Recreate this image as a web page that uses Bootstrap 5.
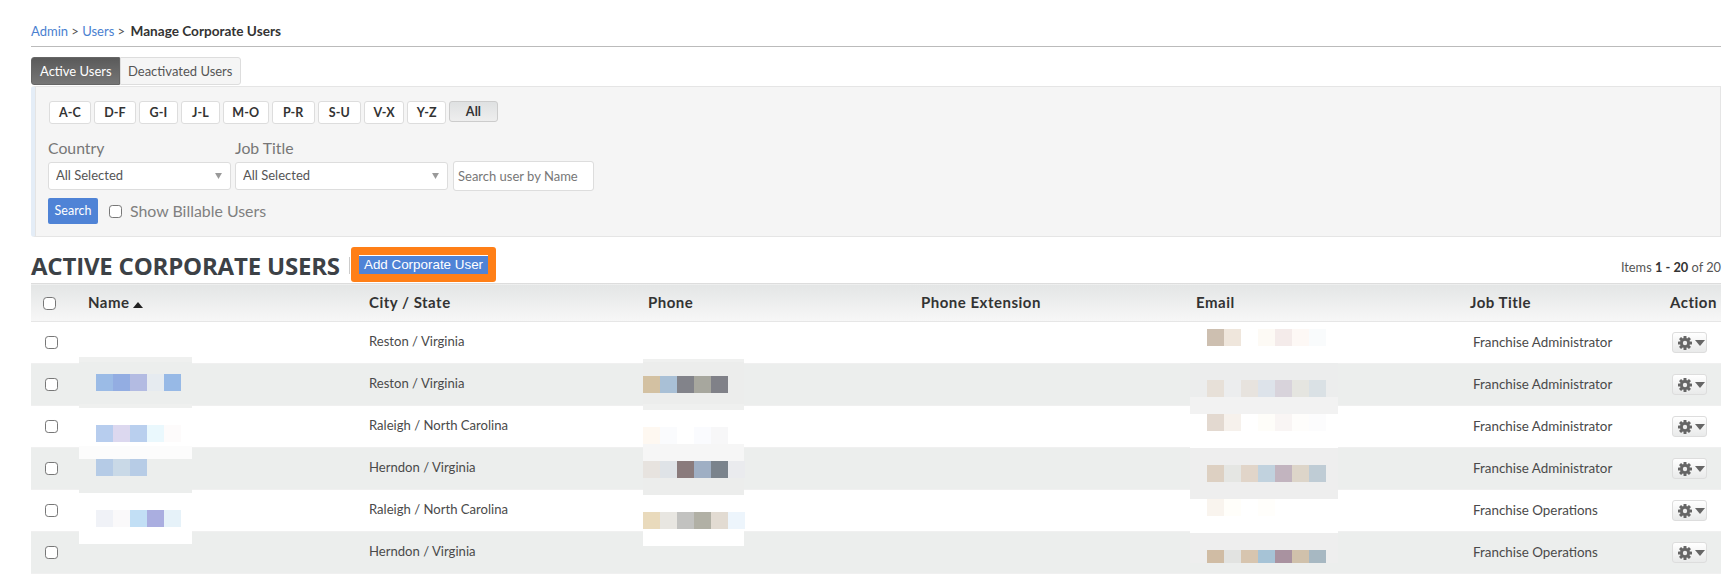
<!DOCTYPE html>
<html lang="en"><head><meta charset="utf-8"><title>Manage Corporate Users</title>
<link href="https://cdn.jsdelivr.net/npm/bootstrap@5.3.0/dist/css/bootstrap.min.css" rel="stylesheet">
<style>
html,body{background:#fff;overflow:hidden}
body{font-family:Lato,"Noto Sans",sans-serif;font-size:13px;color:#444;height:575px}
.pg{position:relative;padding:21px 10px 0 31px;width:1731px;height:575px;overflow:hidden}
.crumb{height:26px;border-bottom:1px solid #bbb;font-size:13px;line-height:20px;margin-bottom:10px;white-space:nowrap;color:#555}
.crumb a{color:#4a7fd0;text-decoration:none}
.crumb b{color:#333;margin-left:2px;font-weight:700;font-size:13.600px}
.tabs{height:28px;margin-bottom:1px}
.tb{height:28px;padding:0 0 0 8px;line-height:26px;font-size:13px;border:1px solid #ddd;background:#f5f5f5;color:#555;border-radius:0 3px 3px 0;white-space:nowrap}
.tb.on{background:linear-gradient(#5a5a5a,#767676);color:#fff;border-color:#666;border-radius:3px 0 0 3px;width:89px}
.tb.off{width:121px;padding-left:7px}
.filt{height:151px;background:#f5f5f5;border:1px solid #e5e5e5;border-left:4px solid #e4edf7;box-shadow:inset 1px 0 0 #e4e4e4;padding:14px 0 0 14px;border-radius:3px 0 0 3px}
.ltrs{gap:3.200px;height:37px}
.lt{height:23px;padding:0;line-height:21px;font-size:12.500px;font-weight:700;color:#333;background:#fff;border:1px solid #ddd;border-radius:3px;letter-spacing:.1px}
.lt.cur{height:21px;line-height:15px;background:linear-gradient(#dfe1e2,#eee);border-color:#ccc}
.w42{width:42px}.w41{width:41.600px}.w39{width:38.800px}.w40{width:40px}.w46{width:45.600px}.w43{width:43px}.w49{width:48.400px}
.lbl{font-size:15.800px;color:#777;line-height:20px;height:24px}
.c1{width:187px;margin-left:-1px}.c2{width:218px}
.sel{height:28px;font-size:13px;color:#555;padding:0 0 0 7px;border:1px solid #ddd;border-radius:3px;background-color:#fff;background-position:right 8px center;background-size:7px 6px;background-image:url("data:image/svg+xml,%3Csvg xmlns='http://www.w3.org/2000/svg' viewBox='0 0 8 7'%3E%3Cpath d='M0 0h8L4 7z' fill='%23999'/%3E%3C/svg%3E");font-family:inherit}
.s1{width:183px;margin-left:-1px}.s2{width:213px;margin-right:5px}
.inp{width:141px;height:30px;font-size:13px;padding:0 4px;border:1px solid #ddd;border-radius:3px;color:#777;margin-top:-1px;font-family:inherit}
.inp::placeholder{color:#777;opacity:1}
.srow{margin-top:7px;gap:11px;margin-left:-1px}
.go{width:50px;height:26px;padding:0;font-size:12.500px;background:#4f83d6;color:#fff;border:0;border-radius:2px;line-height:26px}
.ck{width:13px;height:13px;margin:0;border:1px solid #777;border-radius:3px;flex:none}
.bill{font-size:15.900px;color:#808080;margin-left:-3px}
.hd{height:46px}
.ttl{font-family:"Open Sans",Lato,sans-serif;font-size:24px;font-weight:700;color:#3c4146;margin:0;line-height:30px;letter-spacing:-.2px;width:318px;flex:none;white-space:nowrap;margin-top:14px}
.sep{width:1px;height:17px;background:#ccc;margin-top:20px;flex:none}
.hi{background:#ff7f17;border-radius:3px;padding:8px;margin:10px 0 0 1px;width:145px;height:35px;flex:none}
.add{display:block;width:129px;height:19px;line-height:18px;padding:0;font-family:"Liberation Sans",Arial,sans-serif;font-size:13.400px;background:#4f83d6;border:0;border-top:1px solid #fff;color:#fff;border-radius:0;white-space:nowrap}
.cnt{margin-left:auto;margin-top:21px;font-size:12.800px;color:#555;white-space:nowrap}
.cnt b{color:#333}
.utbl{table-layout:fixed;width:1690px;margin:0;border-collapse:collapse;--bs-table-bg:transparent;--bs-table-hover-bg:transparent}
.utbl th{height:38px;padding:0 0 0 9px;vertical-align:middle;font-size:15px;font-weight:700;color:#333;background:linear-gradient(#e3e5e5,#f7f7f7);border-top:1px solid #ddd;border-bottom:1px solid #e6e6e6;white-space:nowrap;letter-spacing:.5px}
.utbl td{height:42px;padding:0 0 1px 9px;vertical-align:middle;font-size:13.100px;color:#4a4a4a;border-bottom:1px solid #f0f0f0;white-space:nowrap}
.utbl tbody tr:nth-child(even) td{background:#eceeed}
.utbl td.ck1{padding:0 0 0 14px}
.utbl th.ck1{padding:1px 0 0 12px}
.utbl td.jb{padding-left:12px;font-size:13.400px}
.utbl td.ac{padding:1px 0 1px 11px}
.arr{display:inline-block;border:5px solid transparent;border-top:0;border-bottom:6px solid #222;margin-left:3px}
.gear{display:flex;align-items:center;gap:3px;width:35px;height:21px;padding:0 0 0 5px;background:linear-gradient(#fff,#e9eaea);border:1px solid #ddd;border-radius:3px}
.tri{width:0;height:0;border:5px solid transparent;border-top:6px solid #666;border-bottom:0}
.rd{position:absolute}
.sw{position:absolute;display:flex}
.sw i{display:block;flex:none}
</style></head><body>
<div class="pg" id="pg">
<div class="crumb"><a href="#">Admin</a> &gt; <a href="#">Users</a> &gt; <b>Manage Corporate Users</b></div>
<div class="tabs d-flex"><div class="tb on">Active Users</div><div class="tb off">Deactivated Users</div></div>
<div class="filt">
 <div class="ltrs d-flex align-items-start">
  <button class="btn lt w42">A-C</button><button class="btn lt w41">D-F</button><button class="btn lt w39">G-I</button><button class="btn lt w39">J-L</button><button class="btn lt w46">M-O</button><button class="btn lt w43">P-R</button><button class="btn lt w43">S-U</button><button class="btn lt w40">V-X</button><button class="btn lt w39">Y-Z</button><button class="btn lt cur w49">All</button>
 </div>
 <div class="d-flex"><div class="lbl c1">Country</div><div class="lbl">Job Title</div></div>
 <div class="d-flex align-items-start">
  <select class="form-select sel s1 me-1"><option>All Selected</option></select>
  <select class="form-select sel s2"><option>All Selected</option></select>
  <input class="form-control inp" placeholder="Search user by Name">
 </div>
 <div class="d-flex align-items-center srow">
  <button class="btn go">Search</button>
  <input type="checkbox" class="form-check-input ck"><span class="bill">Show Billable Users</span>
 </div>
</div>
<div class="hd d-flex align-items-start">
 <h2 class="ttl">ACTIVE CORPORATE USERS</h2><div class="sep"></div>
 <div class="hi"><button class="btn add">Add Corporate User</button></div>
 <div class="cnt">Items <b>1 - 20</b> of 20</div>
</div>
<table class="table utbl">
<colgroup><col style="width:48px"><col style="width:281px"><col style="width:279px"><col style="width:273px"><col style="width:275px"><col style="width:274px"><col style="width:200px"><col style="width:60px"></colgroup>
<thead><tr><th class="ck1"><input type="checkbox" class="form-check-input ck d-block"></th><th>Name<span class="arr"></span></th><th>City / State</th><th>Phone</th><th>Phone Extension</th><th>Email</th><th>Job Title</th><th>Action</th></tr></thead>
<tbody id="tb"></tbody>
</table>
</div>
<svg width="0" height="0" class="d-block position-absolute"><defs><symbol id="gr" viewBox="0 0 14 14"><g fill="#666"><circle cx="7" cy="7" r="5"/><rect x="5.500" y="0" width="3" height="14" rx=".5"/><rect x="5.500" y="0" width="3" height="14" rx=".5" transform="rotate(45 7 7)"/><rect x="5.500" y="0" width="3" height="14" rx=".5" transform="rotate(90 7 7)"/><rect x="5.500" y="0" width="3" height="14" rx=".5" transform="rotate(135 7 7)"/></g><circle cx="7" cy="7" r="2.200" fill="#eee"/></symbol></defs></svg>
<script>
var rows=[["Reston / Virginia","Franchise Administrator"],["Reston / Virginia","Franchise Administrator"],["Raleigh / North Carolina","Franchise Administrator"],["Herndon / Virginia","Franchise Administrator"],["Raleigh / North Carolina","Franchise Operations"],["Herndon / Virginia","Franchise Operations"]];
document.getElementById('tb').innerHTML=rows.map(function(r){return '<tr><td class="ck1"><input type="checkbox" class="form-check-input ck d-block"></td><td></td><td>'+r[0]+'</td><td></td><td></td><td></td><td class="jb">'+r[1]+'</td><td class="ac"><button class="btn gear"><svg width="14" height="14"><use href="#gr"/></svg><span class="tri"></span></button></td></tr>'}).join('');
var pg=document.getElementById('pg');
function patch(x,y,w,h,c){var d=document.createElement('div');d.className='rd';d.style.cssText='left:'+x+'px;top:'+y+'px;width:'+w+'px;height:'+h+'px;background:'+c;pg.appendChild(d)}
function sw(x,y,cw,h,cs){var d=document.createElement('div');d.className='sw';d.style.cssText='left:'+x+'px;top:'+y+'px';cs.forEach(function(c){var i=document.createElement('i');i.style.cssText='width:'+cw+'px;height:'+h+'px;background:'+c;d.appendChild(i)});pg.appendChild(d)}
// name column
patch(79,357,113,51,'#eff0ef');patch(79,362,113,42,'#eceeed');
sw(96,374,17,17,['#9bbbe6','#93ade2','#b3bbe2','#e6ebf0','#97b9e6']);
patch(79,408,113,51,'#fff');patch(79,446,113,13,'#fcfcfc');
sw(96,425,17,17,['#b7cdee','#dcd8ef','#b9cfee','#eaf8fd','#fdfbfb']);
patch(79,459,113,34,'#eceeed');
sw(96,459,17,17,['#b5cbe6','#c9d9e7','#b7cce6']);
patch(79,493,113,51,'#fff');
sw(96,510,17,17,['#f0f2f7','#faf9fa','#c2dff5','#aaaee0','#e6f2f9']);
// phone column
patch(643,359,101,51,'#eff0ef');patch(643,362,101,42,'#ecedec');
sw(643,376,17,17,['#d3c1a2','#a9c0d6','#82838a','#a7a79e','#808188']);
patch(643,410,101,34,'#fff');patch(643,444,101,17,'#f6f6f6');
sw(643,427,17,17,['#fef8f1','#fafbfd','#fff','#fafbfe','#f7f7f8']);
patch(643,461,101,34,'#ecedec');
sw(643,461,17,17,['#e7e3df','#dfe3e7','#8a7b7c','#9fafc4','#7a838c','#eaebee']);
patch(643,495,101,51,'#fff');
sw(643,512,17,17,['#e9dabc','#e8e6e1','#c2c2c0','#b1b0a5','#e2dbd2','#edf5fc']);
// email column
sw(1207,329,17,17,['#cdbfb0','#efe6dc','#fff','#fdfaf5','#f4ebea','#fdf8f5','#f9fbfc']);
patch(1190,363,148,34,'#eceded');patch(1190,397,148,17,'#f2f2f2');
sw(1207,380,17,17,['#e7e0d8','#ecedee','#e7e3de','#dde3ea','#d8d3db','#e5e5e0','#dae1e5']);
patch(1190,414,148,34,'#fff');
sw(1207,414,17,17,['#e3d9d0','#f6f1ec','#fff','#fefdf9','#f9f5f4','#fefdfb','#fcfcfd']);
patch(1190,448,148,51,'#eeeeee');
sw(1207,465,17,17,['#ddd0c2','#e5e6e3','#e1d5c9','#c1d2de','#c2b4bf','#ddd5c9','#bfccd5']);
patch(1190,499,148,34,'#fff');
sw(1207,499,17,17,['#f9f4ee','#fffefa','#fff','#fffefb']);
patch(1190,533,148,30,'#eeeeee');
sw(1207,550,17,13,['#d0bca4','#e2e3e1','#d7c5af','#a6c3d6','#a992a0','#d0c1ab','#a7b8c2']);
</script>
<script src="https://cdn.jsdelivr.net/npm/bootstrap@5.3.0/dist/js/bootstrap.bundle.min.js"></script>
</body></html>
